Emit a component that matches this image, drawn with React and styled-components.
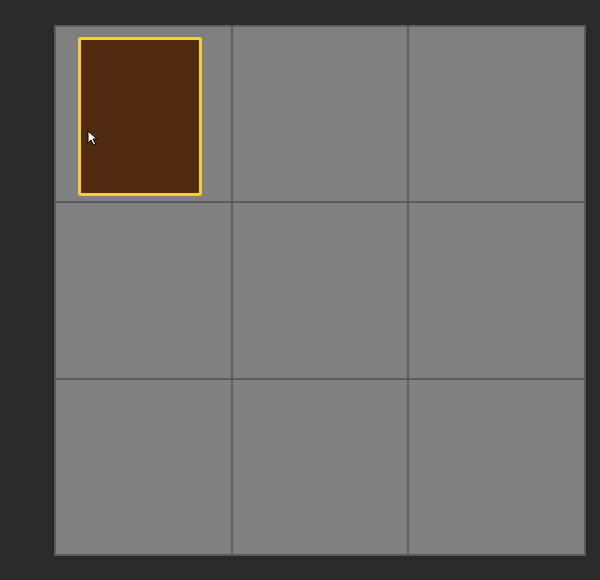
import React from "react";
import styled, { createGlobalStyle } from "styled-components";

const GlobalStyle = createGlobalStyle`
  html, body {
    margin: 0;
    padding: 0;
    background: #2b2b2b;
    font-family: "Liberation Sans", Arial, sans-serif;
  }
`;

const Page = styled.div`
  width: 600px;
  height: 580px;
  background: #2b2b2b;
  padding: 25px 0 0 54px;
  box-sizing: border-box;
`;

const Board = styled.div`
  display: grid;
  grid-template-columns: repeat(3, 1fr);
  grid-template-rows: repeat(3, 1fr);
  gap: 2px;
  padding: 2px;
  width: 532px;
  height: 531px;
  box-sizing: border-box;
  background: #5c5c5c;
`;

const Cell = styled.div`
  position: relative;
  background: #808080;
  padding: 10px 0 0 22px;
  box-sizing: border-box;
`;

const Block = styled.div`
  position: relative;
  width: 124px;
  height: 159px;
  box-sizing: border-box;
  background: ${(props) => props.color};
  border: 3px solid ${(props) => (props.selected ? "#f3d12e" : "transparent")};
  border-radius: 3px;
`;

const Cursor = styled.svg`
  position: absolute;
  left: 6px;
  top: 90px;
  width: 11px;
  height: 16px;
`;

const cells = Array.from({ length: 9 }, (_, i) => i);

const App = () => (
  <>
    <GlobalStyle />
    <Page>
      <Board>
        {cells.map((i) => (
          <Cell key={i}>
            {i === 0 && (
              <Block color="#522a10" selected>
                <Cursor viewBox="0 0 11 16">
                  <path
                    d="M1 1 L1 13 L4 10 L6.5 15 L8.5 14 L6 9 L10 9 Z"
                    fill="#ffffff"
                    stroke="#000000"
                    strokeWidth="1"
                    strokeLinejoin="round"
                  />
                </Cursor>
              </Block>
            )}
          </Cell>
        ))}
      </Board>
    </Page>
  </>
);

export default App;
